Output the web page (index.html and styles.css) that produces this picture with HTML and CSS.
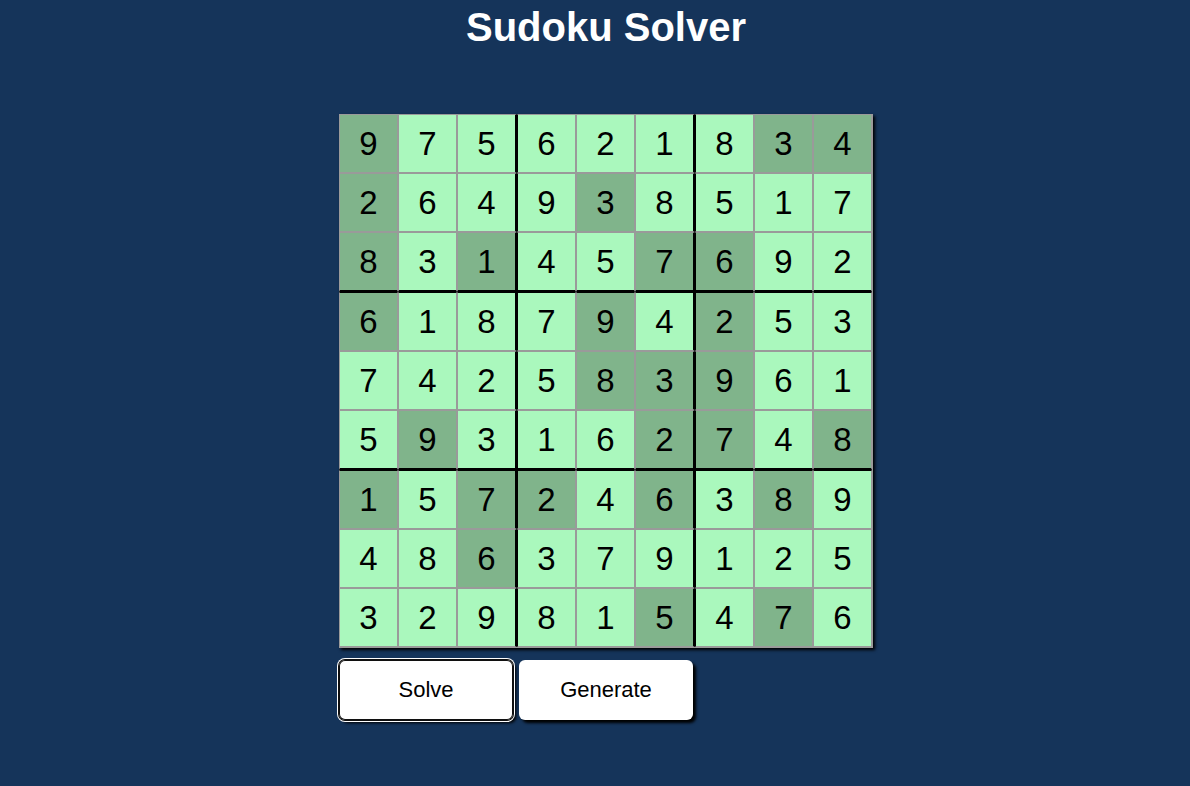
FILE: index.html
```html
<!DOCTYPE html>
<html lang="en">
<head>
<meta charset="utf-8">
<title>Sudoku Solver</title>
<link rel="stylesheet" href="styles.css">
</head>
<body>
<div class="app">
  <h1 class="title">Sudoku Solver</h1>
  <div class="board-wrap">
    <table class="board">
      <tbody id="board"></tbody>
    </table>
    <div class="actions">
      <button class="btn btn-focus" type="button">Solve</button>
      <button class="btn" type="button">Generate</button>
    </div>
  </div>
</div>
<script src="app.js"></script>
</body>
</html>
```

FILE: app.js
```js
var values = [
  "975621834",
  "264938517",
  "831457692",
  "618794253",
  "742583961",
  "593162748",
  "157246389",
  "486379125",
  "329815476"
];
var given = [
  "100000011",
  "100010000",
  "101001100",
  "100010100",
  "000011100",
  "010001101",
  "101101010",
  "001000000",
  "000001010"
];
var tbody = document.getElementById("board");
for (var r = 0; r < 9; r++) {
  var tr = document.createElement("tr");
  if (r === 3 || r === 6) tr.className = "band-start";
  if (r === 2 || r === 5) tr.className = "band-end";
  for (var c = 0; c < 9; c++) {
    var td = document.createElement("td");
    var cls = "cell";
    if (given[r][c] === "1") cls += " given";
    if (c === 2 || c === 5) cls += " stack-end";
    if (c === 3 || c === 6) cls += " stack-start";
    td.className = cls;
    td.textContent = values[r][c];
    tr.appendChild(td);
  }
  tbody.appendChild(tr);
}
```

FILE: styles.css
```css
html, body {
  margin: 0;
  padding: 0;
  background: #15345a;
  height: 100%;
}

.app {
  display: flex;
  flex-direction: column;
  align-items: center;
  padding-left: 22px;
  font-family: "Liberation Sans", Arial, sans-serif;
}

.title {
  margin: 4px 0 0;
  font-size: 40px;
  line-height: 46px;
  font-weight: bold;
  color: #ffffff;
}

.board-wrap {
  margin-top: 64px;
  display: flex;
  flex-direction: column;
  align-items: flex-start;
}

.board {
  border-collapse: separate;
  border-spacing: 0;
  border-right: 1px solid #9a9a9a;
  border-bottom: 1px solid #9a9a9a;
  box-shadow: 2px 2px 3px #000;
  background: #999;
}

.cell {
  width: 57px;
  height: 57px;
  padding: 0;
  box-sizing: content-box;
  border: 1px solid #9a9a9a;
  background: #aaf8bd;
  color: #000;
  font-size: 33px;
  text-align: center;
  vertical-align: middle;
  line-height: 57px;
}

.cell.given {
  background: #80b48b;
}

.cell.stack-end {
  border-right: 2px solid #000;
}

.cell.stack-start {
  border-left: 1px solid #000;
}

.band-end .cell {
  border-bottom: 2px solid #000;
}

.band-start .cell {
  border-top: 1px solid #000;
}

.actions {
  display: flex;
  gap: 6px;
  margin-top: 12px;
}

.btn {
  width: 174px;
  height: 60px;
  border: none;
  border-radius: 6px;
  background: #ffffff;
  color: #000;
  font-family: "Liberation Sans", Arial, sans-serif;
  font-size: 22px;
  box-shadow: 3px 3px 3px #000;
  padding: 0;
}

.btn-focus {
  box-shadow: inset 0 0 0 1px #101010, 0 0 0 1px #101010, 0 0 0 2px #ffffff, 3px 3px 3px #000;
}
```
